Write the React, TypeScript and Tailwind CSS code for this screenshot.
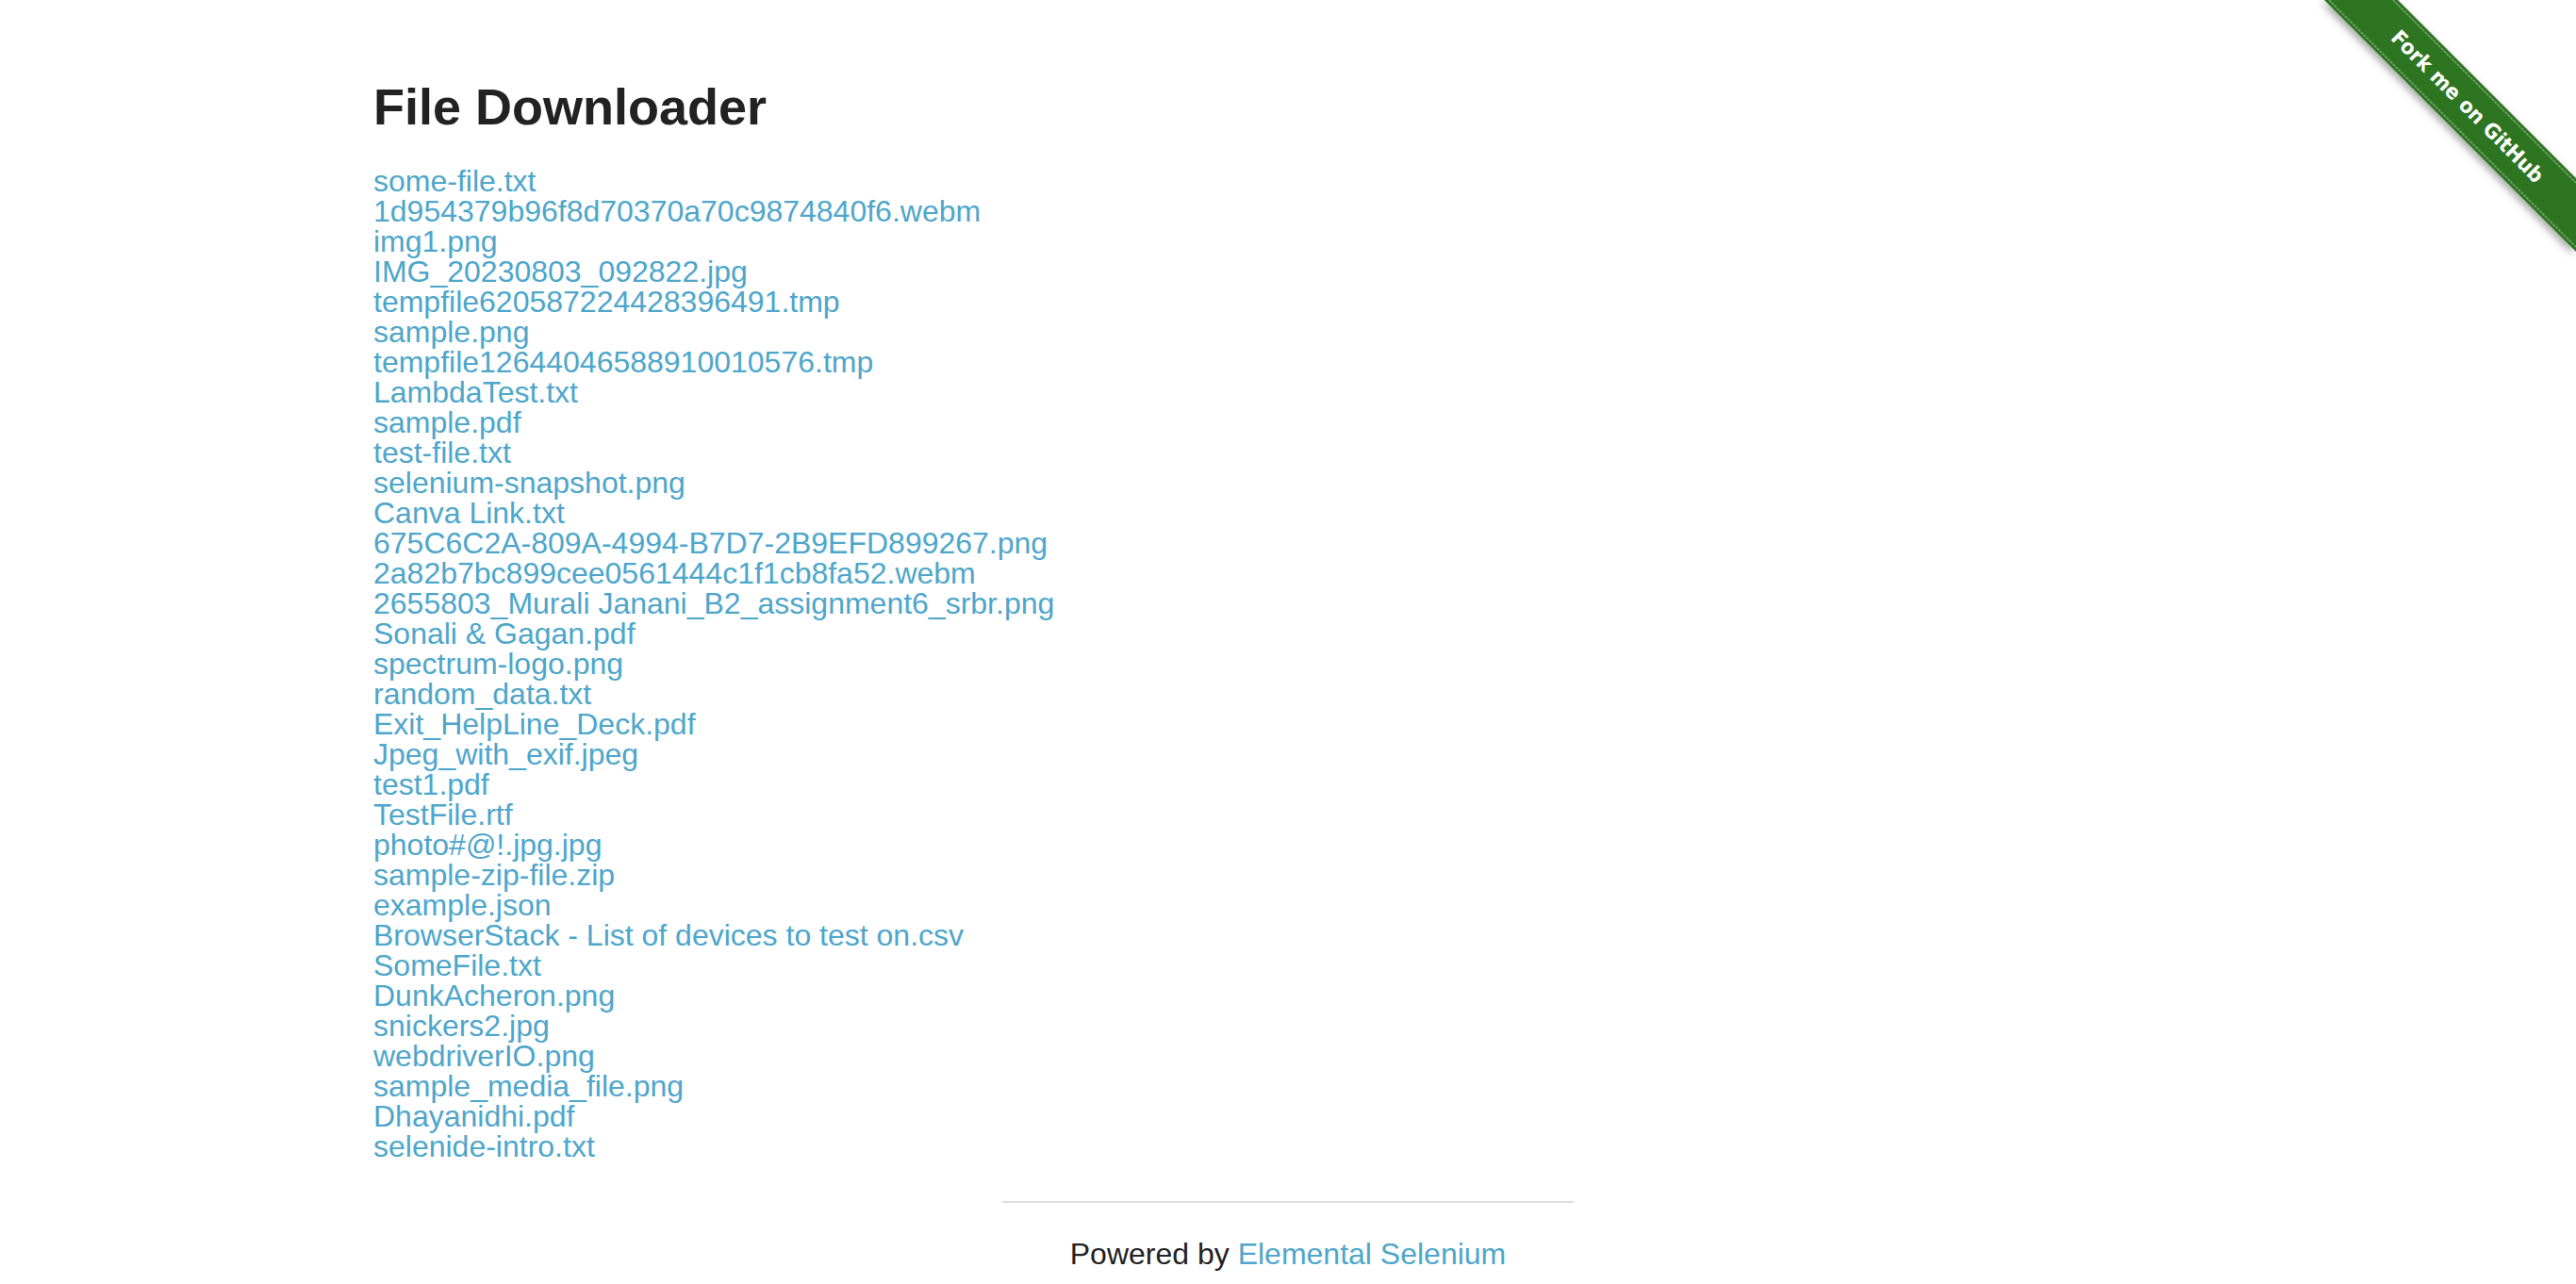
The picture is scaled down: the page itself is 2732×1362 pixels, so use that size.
const files = [
  "some-file.txt",
  "1d954379b96f8d70370a70c9874840f6.webm",
  "img1.png",
  "IMG_20230803_092822.jpg",
  "tempfile620587224428396491.tmp",
  "sample.png",
  "tempfile12644046588910010576.tmp",
  "LambdaTest.txt",
  "sample.pdf",
  "test-file.txt",
  "selenium-snapshot.png",
  "Canva Link.txt",
  "675C6C2A-809A-4994-B7D7-2B9EFD899267.png",
  "2a82b7bc899cee0561444c1f1cb8fa52.webm",
  "2655803_Murali Janani_B2_assignment6_srbr.png",
  "Sonali & Gagan.pdf",
  "spectrum-logo.png",
  "random_data.txt",
  "Exit_HelpLine_Deck.pdf",
  "Jpeg_with_exif.jpeg",
  "test1.pdf",
  "TestFile.rtf",
  "photo#@!.jpg.jpg",
  "sample-zip-file.zip",
  "example.json",
  "BrowserStack - List of devices to test on.csv",
  "SomeFile.txt",
  "DunkAcheron.png",
  "snickers2.jpg",
  "webdriverIO.png",
  "sample_media_file.png",
  "Dhayanidhi.pdf",
  "selenide-intro.txt",
];

function ForkRibbon() {
  return (
    <svg
      className="absolute top-0 right-0"
      width="298"
      height="298"
      viewBox="0 0 298 298"
    >
      <defs>
        <filter id="rs" x="-20%" y="-20%" width="140%" height="140%">
          <feDropShadow dx="-3" dy="3" stdDeviation="4" floodColor="#000" floodOpacity="0.35" />
        </filter>
      </defs>
      <polygon points="31,0 109,0 298,189 298,267" fill="#2f7424" filter="url(#rs)" />
      <line x1="36" y1="0" x2="298" y2="262" stroke="#ffffff" strokeOpacity="0.35" strokeWidth="1.6" strokeDasharray="3 1" />
      <line x1="104" y1="0" x2="298" y2="194" stroke="#ffffff" strokeOpacity="0.35" strokeWidth="1.6" strokeDasharray="3 1" />
      <text
        x="183"
        y="113"
        transform="rotate(45 183 113)"
        textAnchor="middle"
        dominantBaseline="central"
        fill="#ffffff"
        fontFamily="'DejaVu Sans', sans-serif"
        fontWeight="bold"
        fontSize="22"
        textLength="218"
        lengthAdjust="spacingAndGlyphs"
      >
        Fork me on GitHub
      </text>
    </svg>
  );
}

export default function App() {
  return (
    <div className="relative min-h-screen bg-white font-['Liberation_Sans',Arial,sans-serif] text-[#222222]">
      <ForkRibbon />
      <div className="mx-auto w-[2000px] px-[30px] pt-[80px]">
        <h3 className="mb-[28px] text-[54px] font-bold leading-[1.25]">File Downloader</h3>
        <div className="flex flex-col items-start text-[32px] leading-none">
          {files.map((f) => (
            <a key={f} href="#" className="whitespace-pre text-[#4ea6cb] no-underline">
              {f}
            </a>
          ))}
        </div>
      </div>
      <div className="mx-auto w-[606px] pb-[20px]">
        <hr className="mt-[42px] mb-[38px] border-t-2 border-[#dddddd]" />
        <div className="text-center text-[32px] leading-none">
          Powered by{" "}
          <a href="#" className="text-[#4ea6cb]">
            Elemental Selenium
          </a>
        </div>
      </div>
    </div>
  );
}
